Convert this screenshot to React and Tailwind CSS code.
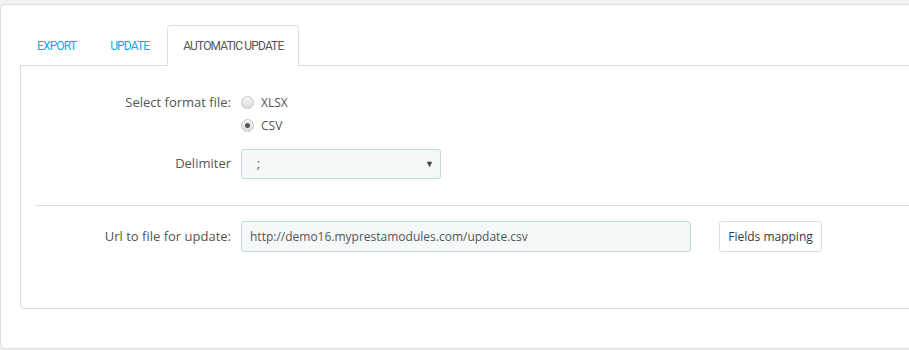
import React from "react";

const Radio = ({ checked, label }) => (
  <label className="flex items-center h-[23px] gap-[7px] text-[12px]">
    <span className="w-[13px] h-[13px] rounded-full border border-[#c4c4c4] bg-gradient-to-b from-[#f4f4f4] to-[#dedede] flex items-center justify-center">
      {checked && <span className="w-[5px] h-[5px] rounded-full bg-[#555]" />}
    </span>
    <span>{label}</span>
  </label>
);

const Row = ({ label, children, className = "" }) => (
  <div className={"flex " + className}>
    <div className="w-[210px] shrink-0 text-right text-[13px]">{label}</div>
    <div className="pl-[10px] flex items-start">{children}</div>
  </div>
);

export default function App() {
  return (
    <div
      className="h-[350px] w-[909px] overflow-hidden bg-[#eff1f2] pt-[4px] text-[12px] text-[#555]"
      style={{ fontFamily: '"Open Sans", "Liberation Sans", sans-serif' }}
    >
      <div className="w-[960px] h-[345px] bg-white border border-[#dcdfe1] rounded-[5px] pt-[19px] pl-[19px]">
        <div
          className="flex items-end h-[41px] text-[12px] uppercase tracking-[-0.85px]"
          style={{ fontFamily: 'Roboto, "Liberation Sans", sans-serif' }}
        >
          <div className="px-[17px] h-[39px] flex items-center text-[#00aff0]">Export</div>
          <div className="px-[17px] h-[39px] flex items-center text-[#00aff0]">Update</div>
          <div className="relative -mb-px ml-px px-[15px] h-[41px] flex items-center text-[#555] bg-white border border-b-0 border-[#dcdfe1] rounded-t-[4px]">
            Automatic Update
          </div>
        </div>
        <div className="h-[244px] border border-[#dcdfe1] rounded-bl-[4px] pt-[25px]">
          <Row label={<span className="leading-[23px]">Select format file:</span>}>
            <div className="flex flex-col">
              <Radio label="XLSX" />
              <Radio checked label="CSV" />
            </div>
          </Row>
          <Row className="mt-[12px] items-center" label="Delimiter">
            <div className="w-[200px] h-[30px] bg-[#f5f8f9] border border-[#c7d6db] rounded-[3px] flex items-center justify-between pl-[15px] pr-[6px]">
              <span>;</span>
              <span className="text-[9px] text-[#444]">▼</span>
            </div>
          </Row>
          <div className="ml-[15px] mt-[26px] border-t border-[#dcdfe1]" />
          <Row className="mt-[15px] items-center" label="Url to file for update:">
            <div className="flex items-center">
              <div className="w-[450px] h-[31px] bg-[#f5f8f9] border border-[#c7d6db] rounded-[3px] flex items-center px-[8px]">
                http://demo16.myprestamodules.com/update.csv
              </div>
              <button className="ml-[28px] w-[103px] h-[31px] bg-white border border-[#dcdfe1] rounded-[3px] text-[#363a41] font-normal">
                Fields mapping
              </button>
            </div>
          </Row>
        </div>
      </div>
    </div>
  );
}
